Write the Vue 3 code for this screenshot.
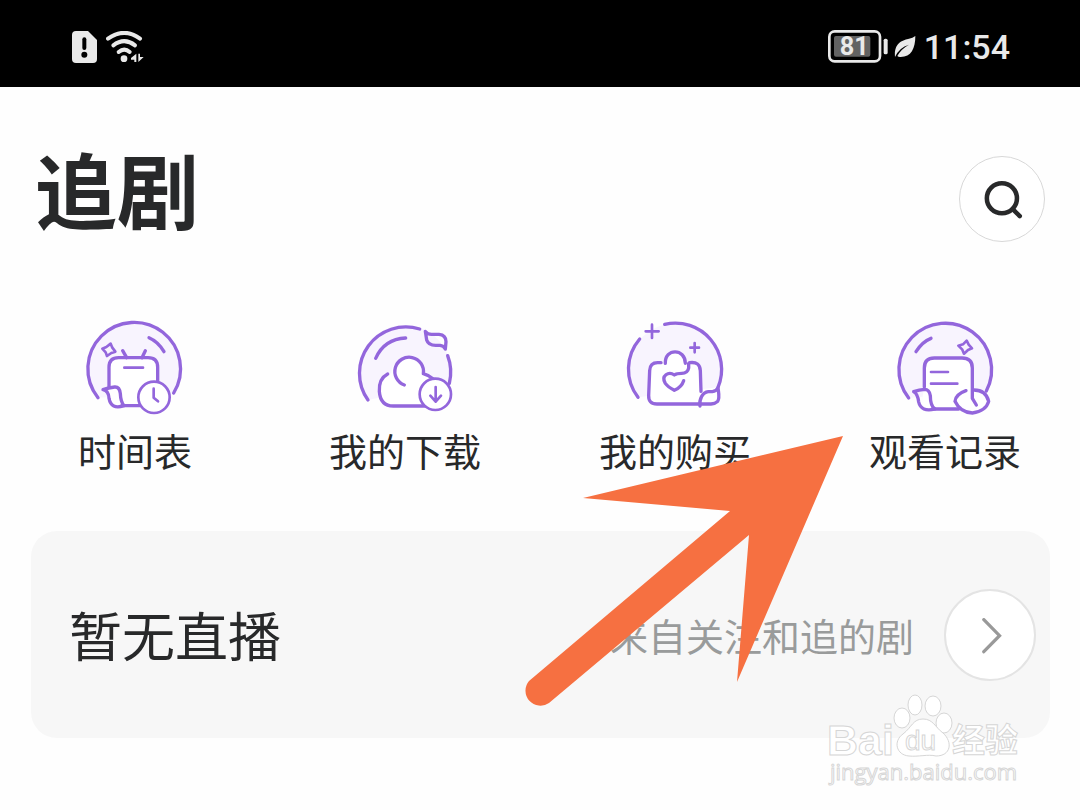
<template>
  <div class="screen">
    <!-- Status bar -->
    <header class="status-bar">
      <div class="status-left">
        <svg class="sim-icon" viewBox="0 0 75 96" aria-hidden="true">
          <path d="M12 0H48L75 27V84Q75 96 63 96H12Q0 96 0 84V12Q0 0 12 0Z" fill="#e9e9e9" />
          <path d="M37 25V51" stroke="#000" stroke-width="12" stroke-linecap="round" />
          <circle cx="37" cy="71" r="9" fill="#000" />
        </svg>
        <svg class="wifi-icon" viewBox="0 0 114 96" aria-hidden="true">
          <g fill="none" stroke="#e9e9e9" stroke-width="12" stroke-linecap="round">
            <path d="M6 23Q55 -12 102 23" />
            <path d="M22 43Q55 18 87 43" />
            <path d="M38 63Q55 49 71 63" />
          </g>
          <circle cx="54" cy="83" r="10" fill="#e9e9e9" />
          <path d="M91 68V93H85V86H75V81Z" fill="#e9e9e9" />
          <path d="M97 93V68H102V78H113Z" fill="#e9e9e9" />
        </svg>
      </div>
      <div class="status-right">
        <svg class="battery-icon" viewBox="0 0 180 99" role="img" aria-label="81%">
          <rect x="4" y="4" width="152" height="90" rx="16" fill="none" stroke="#e9e9e9" stroke-width="8" />
          <rect x="18" y="18" width="109" height="62" rx="6" fill="#626262" />
          <rect x="167" y="26" width="12" height="47" rx="5" fill="#e9e9e9" />
          <text class="battery-level" x="79" y="74" text-anchor="middle">81</text>
        </svg>
        <svg class="leaf-icon" viewBox="0 0 64 66" aria-hidden="true">
          <path d="M63 0C63 38 50 64 17 63Q12 63 9 60Q20 39 44 26Q15 34 2 63C-2 18 28 12 44 8Q55 6 63 0Z" fill="#e9e9e9" />
        </svg>
        <time class="clock">11:54</time>
      </div>
    </header>

    <main class="content">
      <div class="title-row">
        <h1>追剧</h1>
        <button class="search-button" type="button" aria-label="搜索">
          <svg viewBox="0 0 120 120" aria-hidden="true">
            <circle cx="54" cy="55" r="43" />
            <path d="M85 86L105 106" />
          </svg>
        </button>
      </div>

      <!-- Shortcuts -->
      <nav class="shortcuts">
        <a v-for="item in shortcuts" :key="item.label" class="shortcut" href="#">
          <svg viewBox="0 0 360 360" aria-hidden="true">
            <path class="halo" :d="item.halo" />
            <path class="shape" :d="item.shape" />
            <path v-for="(line, index) in item.lines" :key="index" class="line" :d="line" />
            <path v-for="(line, index) in item.thin" :key="'t' + index" class="line thin" :d="line" />
            <template v-if="item.badge">
              <circle class="badge" :cx="item.badge.x" :cy="item.badge.y" r="47" />
              <path class="line thin" :d="item.badge.mark" />
            </template>
          </svg>
          <span>{{ item.label }}</span>
        </a>
      </nav>

      <!-- Live card -->
      <section class="live-card">
        <h2>暂无直播</h2>
        <p>来自关注和追的剧</p>
        <button class="more-button" type="button" aria-label="更多">
          <svg viewBox="0 0 60 110" aria-hidden="true">
            <path d="M5 5L53 54L5 103" />
          </svg>
        </button>
      </section>
    </main>

    <!-- Pointer arrow -->
    <svg class="arrow" viewBox="0 0 330 285" aria-hidden="true">
      <path d="M324 6L64 68L211 81L10 251A15 15 0 0 0 30 273L230 105L218 252Z" />
    </svg>

    <svg class="watermark" viewBox="0 0 240 115" role="img" aria-label="Baidu 经验">
      <g class="paw">
        <ellipse cx="87" cy="28" rx="8" ry="10" />
        <ellipse cx="100" cy="15" rx="7" ry="10" />
        <ellipse cx="118" cy="16" rx="8" ry="10" />
        <ellipse cx="129" cy="33" rx="8" ry="10" />
        <path d="M108 29C98 29 97 37 88 44C78 51 81 65 94 66C103 67 113 64 121 66C136 66 138 52 128 43C120 37 118 29 108 29Z" />
      </g>
      <text class="brand" x="12" y="65">Bai</text>
      <text class="brand-du" x="90" y="60">du</text>
      <text class="brand-cn" x="137" y="62">经验</text>
      <text class="site" x="15" y="90">jingyan.baidu.com</text>
    </svg>
  </div>
</template>

<script setup>
import { ref } from 'vue';

const shortcuts = ref([
  {
    label: '时间表',
    halo: 'M69 263A139 139 0 1 1 296 249Z',
    shape: 'M102 238V170Q102 143 130 143H220Q248 143 248 172V270L220 287H125Q98 280 102 238Z',
    lines: [
      'M69 263A139 139 0 1 1 296 249',
      'M222 83Q250 95 267 125',
      'M143 122L155 143M211 122L201 143',
      'M102 232V172Q102 143 131 143H219Q248 143 248 172V215',
      'M84 239Q101 233 119 231Q134 230 136 251Q137 276 147 287Q108 300 102 265Q101 242 84 239Z',
      'M140 287H194',
    ],
    thin: [
      'M82 116L94 111L107 101L112 113L121 125L109 129L96 138L92 127Z',
      'M148 173H204',
    ],
    badge: { x: 237, y: 262, mark: 'M236 236V263L249 274' },
  },
  {
    label: '我的下载',
    halo: 'M69 270A139 139 0 1 1 313 220Z',
    shape: 'M127 193Q99 207 103 246Q106 288 145 288H260V205L235 191C223 125 139 136 139 190Z',
    lines: [
      'M69 270A139 139 0 0 1 224 57',
      'M92 145Q118 87 182 84',
      'M308 137A139 139 0 0 1 313 220',
      'M241 64Q248 74 262 73H282Q303 75 303 95L301 117Q296 107 285 106H272Q250 106 245 90Z',
      'M178 225A43 43 0 1 1 235 191Q251 195 266 208',
      'M128 192Q101 206 103 244Q106 288 145 288H242',
    ],
    thin: [],
    badge: { x: 271, y: 253, mark: 'M272 231V274M256 257L272 275L288 257' },
  },
  {
    label: '我的购买',
    halo: 'M69 262A139 139 0 1 1 309 232Z',
    shape: 'M104 180Q105 158 130 158H150Q153 124 180 124Q210 126 211 158H230Q254 158 255 180L260 282H123Q98 282 101 259Z',
    lines: [
      'M149 43A139 139 0 0 1 309 232',
      'M74 87A139 139 0 0 0 69 262',
      'M138 158H128Q105 158 104 182L101 256Q100 282 126 282H252',
      'M151 160C149 114 211 114 211 160',
      'M224 158Q255 154 256 182L258 244',
      'M221 160V174Q218 190 200 190Q185 190 178 195C161 183 137 197 151 220Q158 230 178 241Q200 231 206 212',
      'M255 288C252 268 262 247 280 245H292Q304 244 309 233C311 250 315 264 308 274Q301 281 288 282H252',
    ],
    thin: [
      'M111 44V84M92 64H131',
      'M239 99V127M226 113H252',
    ],
  },
  {
    label: '观看记录',
    halo: 'M71 264A139 139 0 1 1 304 243Z',
    shape: 'M118 238V174Q118 144 148 144H231Q262 144 262 174V240Q303 240 311 274Q303 303 262 309L221 297H140Q100 290 118 238Z',
    lines: [
      'M71 264A139 139 0 1 1 304 243',
      'M93 125Q112 95 138 85',
      'M118 231V174Q118 144 148 144H231Q262 144 262 174V265L274 285',
      'M86 245Q103 239 119 238Q133 238 136 257Q136 288 150 297Q108 307 101 276Q98 250 86 245Z',
      'M142 297H221',
      'M243 242Q212 253 210 274Q226 308 262 309Q303 303 311 274Q303 240 267 240',
    ],
    thin: [
      'M138 186H189M138 221H217',
      'M220 107L234 103L245 92L251 104L261 115L249 120L237 131L232 119Z',
    ],
  },
]);
</script>

<style>
body {
  margin: 0;
  background-color: #fefefe;
}
</style>

<style scoped>
.screen {
  position: relative;
  min-height: 100vh;
  overflow: hidden;
  color: #28292a;
  font-family: Roboto, 'Noto Sans CJK SC', sans-serif;
}

/* Status bar */
.status-bar {
  display: flex;
  justify-content: space-between;
  align-items: center;
  height: 87px;
  padding: 0 70px 0 72px;
  box-sizing: border-box;
  background-color: #000;
  color: #e9e9e9;
}

.status-left,
.status-right {
  display: flex;
  align-items: center;
  padding-top: 6px;
}

.status-left {
  gap: 9px;
}

.sim-icon {
  width: 25px;
  height: 32px;
}

.wifi-icon {
  width: 38px;
  height: 32px;
}

.battery-icon {
  width: 60px;
  height: 33px;
}

.battery-level {
  fill: #e9e9e9;
  font-size: 76px;
  font-weight: 700;
}

.leaf-icon {
  width: 22px;
  height: 22px;
  margin: 0 8px 0 6px;
}

.clock {
  font-size: 34px;
  font-weight: 500;
  line-height: 40px;
}

/* Title */
.title-row {
  display: flex;
  justify-content: space-between;
  align-items: center;
  height: 223px;
  padding: 0 35px;
}

h1 {
  margin: 0 0 8px;
  font-size: 82px;
  font-weight: 700;
  line-height: 96px;
}

button {
  display: flex;
  justify-content: center;
  align-items: center;
  flex-shrink: 0;
  padding: 0;
  box-sizing: border-box;
  border-radius: 50%;
  background-color: #fff;
  cursor: pointer;
}

.search-button {
  width: 86px;
  height: 86px;
  border: 1px solid #d8d8d8;
}

.search-button svg {
  width: 42px;
  height: 42px;
  margin: 2px 0 0 4px;
  fill: none;
  stroke: #28292a;
  stroke-width: 13;
  stroke-linecap: round;
}

/* Shortcuts */
.shortcuts {
  display: grid;
  grid-template-columns: repeat(4, 1fr);
}

.shortcut {
  display: flex;
  flex-direction: column;
  align-items: center;
  color: inherit;
  font-size: 38px;
  line-height: 46px;
  text-decoration: none;
  white-space: nowrap;
}

.shortcut svg {
  width: 120px;
  height: 120px;
}

.halo {
  fill: #f8f4fe;
}

.shape {
  fill: #fff;
}

.line {
  fill: none;
  stroke: #9366dc;
  stroke-width: 10;
  stroke-linecap: round;
  stroke-linejoin: round;
}

.thin {
  stroke-width: 8;
}

.badge {
  fill: #fff;
  stroke: #9366dc;
  stroke-width: 8;
}

/* Live card */
.live-card {
  display: flex;
  align-items: center;
  height: 207px;
  margin: 55px 30px 0 31px;
  padding: 0 14px 0 38px;
  box-sizing: border-box;
  border-radius: 26px;
  background-color: #f7f7f7;
}

h2 {
  margin: 0;
  padding-top: 8px;
  font-size: 53px;
  font-weight: 400;
  line-height: 64px;
}

.live-card p {
  margin: 0 30px 0 auto;
  padding-top: 6px;
  color: #999b9b;
  font-size: 38px;
  line-height: 46px;
}

.more-button {
  width: 92px;
  height: 92px;
  border: 2px solid #e4e4e4;
}

.more-button svg {
  width: 20px;
  height: 36px;
  margin: 2px 0 0 4px;
  fill: none;
  stroke: #999;
  stroke-width: 10;
  stroke-linecap: round;
}

/* Arrow over the page */
.arrow {
  position: absolute;
  top: 430px;
  right: 231px;
  width: 330px;
  height: 285px;
  fill: #f67041;
  pointer-events: none;
}

/* Watermark */
.watermark {
  position: absolute;
  right: 25px;
  bottom: 5px;
  width: 240px;
  height: 115px;
  fill: #fff;
  stroke: #d6d6d6;
  stroke-width: 1;
  pointer-events: none;
}

.brand {
  font-family: 'Liberation Sans', sans-serif;
  font-size: 43px;
  font-weight: 700;
}

.brand-du {
  font-family: 'Liberation Sans', sans-serif;
  font-size: 28px;
}

.brand-cn {
  font-family: 'Noto Sans CJK SC', sans-serif;
  font-size: 33px;
  font-weight: 700;
}

.site {
  font-family: 'Open Sans', sans-serif;
  font-size: 22px;
}
</style>
